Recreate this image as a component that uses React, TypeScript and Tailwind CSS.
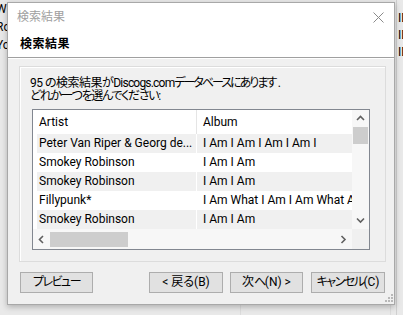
import React from "react";

const rows = [
  ["Peter Van Riper & Georg de...", "I Am I Am I Am I Am I"],
  ["Smokey Robinson", "I Am I Am"],
  ["Smokey Robinson", "I Am I Am"],
  ["Fillypunk*", "I Am What I Am I Am What A"],
  ["Smokey Robinson", "I Am I Am"],
];

function Chevron({ dir }: { dir: "up" | "down" | "left" | "right" }) {
  const paths: Record<string, string> = {
    up: "M1 5 L4.5 1.5 L8 5",
    down: "M1 1.5 L4.5 5 L8 1.5",
    left: "M5 1 L1.5 4.5 L5 8",
    right: "M1.5 1 L5 4.5 L1.5 8",
  };
  const isV = dir === "up" || dir === "down";
  return (
    <svg width={isV ? 9 : 7} height={isV ? 7 : 9} viewBox={isV ? "0 0 9 7" : "0 0 7 9"}>
      <path d={paths[dir]} fill="none" stroke="#606060" strokeWidth="1.6" />
    </svg>
  );
}

function Btn({ children, className }: { children: React.ReactNode; className?: string }) {
  return (
    <div
      className={
        "h-[21px] flex items-center justify-center whitespace-nowrap border border-[#adadad] bg-[#e1e1e1] text-[12px] text-black " +
        (className ?? "")
      }
    >
      {children}
    </div>
  );
}

function K({ children }: { children: React.ReactNode }) {
  return <span className="tracking-[-1.5px]">{children}</span>;
}

export default function App() {
  return (
    <div className="relative w-[403px] h-[315px] overflow-hidden bg-[#e9e9e9] font-['Roboto','Noto_Sans_CJK_JP',sans-serif] [font-feature-settings:'palt'] text-[12px] leading-[13px] text-black">
      {/* backdrop application */}
      <div className="absolute left-[-4px] top-[0px] text-[12px] leading-[18px] text-black">
        <div>W</div>
        <div>Ro</div>
        <div>Yo</div>
      </div>
      <div className="absolute left-[396px] top-[0px] h-[315px] w-[1px] bg-[#d0d0d0]" />
      <div className="absolute left-[398px] top-[10px] text-[12px] leading-[17px] text-black">
        <div>ID</div>
        <div>ID</div>
        <div>ID</div>
      </div>
      <div className="absolute left-[240px] top-[305px] h-[10px] w-[1px] bg-[#dcdcdc]" />
      <div className="absolute left-[390px] top-[305px] h-[10px] w-[1px] bg-[#dcdcdc]" />

      {/* dialog */}
      <div className="absolute left-[7px] top-[2px] w-[388px] h-[303px] border border-[#a8a8a8] bg-[#f0f0f0] shadow-[0_2px_6px_rgba(0,0,0,0.25)] flex flex-col">
        {/* title bar */}
        <div className="h-[28px] bg-white flex items-center justify-between pl-[9px] pr-[8px]">
          <span className="text-[#a0a0a0] text-[12px]">検索結果</span>
          <svg width="11" height="11" viewBox="0 0 11 11" className="mr-[2px]">
            <path d="M0.5 0.5 L10.5 10.5 M10.5 0.5 L0.5 10.5" stroke="#8a8a8a" strokeWidth="1" />
          </svg>
        </div>
        {/* header */}
        <div className="h-[26px] bg-white flex items-center pl-[12px]">
          <span className="font-bold text-[12px] tracking-[0.5px]">検索結果</span>
        </div>
        <div className="h-[1px] bg-[#a0a0a0]" />
        <div className="h-[1px] bg-white" />

        {/* body */}
        <div className="flex-1 flex flex-col pl-[11px] pt-[7px]">
          <div className="w-[367px] h-[196px] border border-[#dcdcdc] shadow-[inset_1px_1px_0_#ffffff] flex flex-col">
            <div className="pl-[10px] pt-[10px] leading-[13px] whitespace-nowrap">
              <div className="tracking-[-0.5px]">
                95 の検索結果が<span className="tracking-[-0.8px]">Discogs.com</span>
                <span className="tracking-[-2px]">データベースにあります</span> .
              </div>
              <div className="tracking-[-1.3px]">どれか一つを選んでください:</div>
            </div>

            {/* list */}
            <div className="ml-[12px] mt-[6px] w-[338px] h-[141px] border border-[#828790] bg-white flex flex-col">
              <div className="flex h-[119px]">
                <div className="w-[319px] flex flex-col overflow-hidden">
                  <div className="h-[24px] flex items-center">
                    <div className="w-[163px] pl-[6px]">Artist</div>
                    <div className="w-[1px] h-[24px] bg-[#e5e5e5]" />
                    <div className="pl-[6px]">Album</div>
                  </div>
                  {rows.map((r, i) => (
                    <div key={i} className="h-[19px] flex pl-[4px] bg-white">
                      <div
                        className={
                          "w-[159px] pl-[2px] flex items-center whitespace-nowrap overflow-hidden " +
                          (i % 2 === 0 ? "bg-[#f0f0f0]" : "bg-white")
                        }
                      >
                        {r[0]}
                      </div>
                      <div className="w-[1px] bg-white" />
                      <div
                        className={
                          "flex-1 pl-[6px] flex items-center whitespace-nowrap overflow-hidden " +
                          (i % 2 === 0 ? "bg-[#f0f0f0]" : "bg-white")
                        }
                      >
                        {r[1]}
                      </div>
                    </div>
                  ))}
                </div>
                {/* vertical scrollbar */}
                <div className="w-[17px] bg-[#f7f7f7] flex flex-col items-center">
                  <div className="h-[17px] flex items-center justify-center">
                    <Chevron dir="up" />
                  </div>
                  <div className="w-[15px] h-[17px] bg-[#cdcdcd]" />
                  <div className="flex-1" />
                  <div className="h-[17px] flex items-center justify-center">
                    <Chevron dir="down" />
                  </div>
                </div>
              </div>
              {/* horizontal scrollbar */}
              <div className="flex h-[20px]">
                <div className="w-[319px] bg-[#f7f7f7] flex items-center">
                  <div className="w-[17px] flex items-center justify-center">
                    <Chevron dir="left" />
                  </div>
                  <div className="w-[78px] h-[15px] bg-[#cdcdcd]" />
                  <div className="flex-1" />
                  <div className="w-[17px] flex items-center justify-center">
                    <Chevron dir="right" />
                  </div>
                </div>
                <div className="w-[17px] bg-[#f0f0f0]" />
              </div>
            </div>
          </div>

          {/* buttons */}
          <div className="flex mt-[10px] relative">
            <Btn className="ml-[1px] w-[73px]">
              <K>プレビュー</K>
            </Btn>
            <Btn className="ml-[56px] w-[74px]">
              &lt; 戻る(B)
            </Btn>
            <Btn className="ml-[7px] w-[73px]">
              次<K>へ</K>(N) &gt;
            </Btn>
            <Btn className="ml-[8px] w-[74px]">
              <K>キャンセル</K>(C)
            </Btn>
          </div>
        </div>

        {/* resize grip */}
        <svg width="9" height="9" viewBox="0 0 9 9" className="absolute right-[1px] bottom-[2px]">
          {[
            [7, 1],
            [4, 4],
            [7, 4],
            [1, 7],
            [4, 7],
            [7, 7],
          ].map(([x, y], i) => (
            <rect key={i} x={x} y={y} width="2" height="2" fill="#b8b8b8" />
          ))}
        </svg>
      </div>
    </div>
  );
}
